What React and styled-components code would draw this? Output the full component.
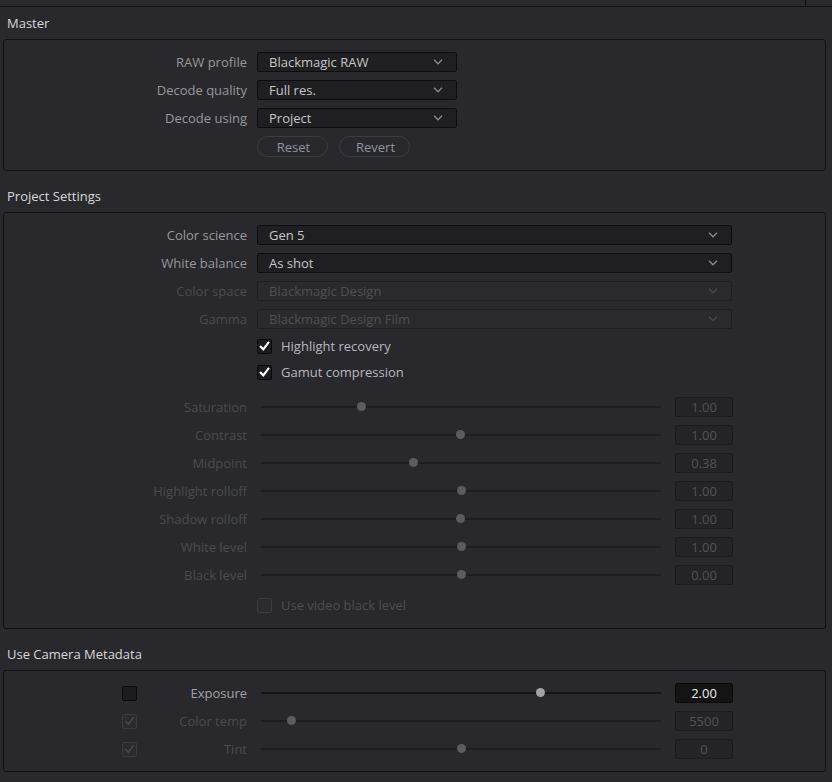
import React from 'react'
import styled, { createGlobalStyle } from 'styled-components'

const GlobalStyle = createGlobalStyle`
  html, body {
    margin: 0;
    padding: 0;
    background: #28282d;
  }
  body {
    font-family: "Open Sans", "Noto Sans", "Liberation Sans", sans-serif;
    font-size: 13px;
    color: #9a9a9e;
  }
`

const Page = styled.div`
  width: 832px;
  height: 782px;
  overflow: hidden;
  background: #28282d;
`
const TabStrip = styled.div`
  height: 6px;
  border-bottom: 1px solid #111113;
  display: flex;
  justify-content: flex-end;
`
const TabEdge = styled.div`
  width: 26px;
  border-left: 1px solid #111113;
`
const Content = styled.div`
  padding: 0 6px 0 3px;
`
const Section = styled.section`
  & + & {
    margin-top: 9px;
  }
`
const SectionTitle = styled.div`
  height: 32px;
  display: flex;
  align-items: center;
  padding-left: 4px;
  color: #d8d8da;
`
const Panel = styled.div`
  border: 1px solid #0f0f11;
  border-radius: 3px;
  padding: 12px 0 ${({ $bottom }) => $bottom || 12}px;
  display: flex;
  flex-direction: column;
  gap: 8px;
`
const Row = styled.div`
  display: grid;
  grid-template-columns: 243px ${({ $control }) => $control || 'auto'};
  column-gap: 10px;
  align-items: center;
  height: ${({ $h }) => $h || 20}px;
  margin-top: ${({ $mt }) => $mt || 0}px;
`
const SliderRowBox = styled.div`
  display: grid;
  grid-template-columns: 243px 400px 58px;
  column-gap: 14px;
  align-items: center;
  height: 20px;
`
const Label = styled.div`
  text-align: right;
  white-space: nowrap;
  color: ${({ $disabled }) => ($disabled ? '#4b4b50' : '#98989c')};
`
const MetaLabel = styled.div`
  display: flex;
  align-items: center;
  justify-content: space-between;
  padding-left: 118px;
  color: ${({ $disabled }) => ($disabled ? '#4b4b50' : '#a2a2a6')};
`
const Select = styled.div`
  height: 20px;
  box-sizing: border-box;
  display: flex;
  align-items: center;
  justify-content: space-between;
  padding: 0 13px 0 11px;
  border-radius: 2px;
  border: 1px solid ${({ $disabled }) => ($disabled ? '#1f1f23' : '#0d0d0f')};
  background: ${({ $disabled }) => ($disabled ? '#29292e' : '#1f1f21')};
  color: ${({ $disabled }) => ($disabled ? '#4f4f55' : '#c6c6c8')};
  svg {
    stroke: ${({ $disabled }) => ($disabled ? '#48484d' : '#8a8a8e')};
  }
`
const Buttons = styled.div`
  display: flex;
  gap: 11px;
`
const PillButton = styled.button`
  width: 71px;
  height: 21px;
  border-radius: 11px;
  border: 1px solid #3c3c43;
  background: transparent;
  color: #8f959e;
  font: inherit;
  padding: 0 0 0 2px;
`
const CheckLine = styled.div`
  display: flex;
  align-items: center;
  gap: 9px;
  color: ${({ $disabled }) => ($disabled ? '#4d4d52' : '#b8b8bc')};
`
const Box = styled.div`
  width: 15px;
  height: 15px;
  box-sizing: border-box;
  border-radius: 2px;
  display: flex;
  align-items: center;
  justify-content: center;
  border: 1px solid ${({ $disabled }) => ($disabled ? '#3a3a3f' : '#0a0a0b')};
  background: ${({ $disabled }) => ($disabled ? '#2a2a2f' : '#1c1c1e')};
  svg {
    stroke: ${({ $disabled }) => ($disabled ? '#4a4a4f' : '#ffffff')};
    stroke-width: ${({ $disabled }) => ($disabled ? 1.4 : 2.2)};
  }
`
const Track = styled.div`
  position: relative;
  height: 2px;
  background: ${({ $disabled }) => ($disabled ? '#1e1e22' : '#151517')};
`
const Thumb = styled.div`
  position: absolute;
  top: -4px;
  width: 9px;
  height: 9px;
  border-radius: 50%;
  background: ${({ $disabled }) => ($disabled ? '#5b5b60' : '#a3a3a6')};
`
const ValueBox = styled.div`
  height: 20px;
  box-sizing: border-box;
  display: flex;
  align-items: center;
  justify-content: center;
  border-radius: 2px;
  border: 1px solid ${({ $disabled }) => ($disabled ? '#1b1b1e' : '#0a0a0b')};
  background: ${({ $disabled }) => ($disabled ? '#242428' : '#141415')};
  color: ${({ $disabled }) => ($disabled ? '#525257' : '#ececee')};
`

const Chevron = () => (
  <svg width="10" height="6" viewBox="0 0 10 6" fill="none" strokeWidth="1.3">
    <polyline points="1,0.8 5,4.8 9,0.8" />
  </svg>
)

const Check = () => (
  <svg width="11" height="11" viewBox="0 0 11 11" fill="none" strokeLinecap="square">
    <polyline points="1.8,5.8 4.3,8.3 9.3,1.8" />
  </svg>
)

const Dropdown = ({ label, value, width, disabled }) => (
  <Row $control={`${width}px`}>
    <Label $disabled={disabled}>{label}</Label>
    <Select $disabled={disabled}>
      <span>{value}</span>
      <Chevron />
    </Select>
  </Row>
)

const CheckRow = ({ label, checked, disabled, mt }) => (
  <Row $h={18} $mt={mt}>
    <div />
    <CheckLine $disabled={disabled}>
      <Box $disabled={disabled}>{checked && <Check />}</Box>
      {label}
    </CheckLine>
  </Row>
)

const Slider = ({ pos, disabled }) => (
  <Track $disabled={disabled}>
    <Thumb $disabled={disabled} style={{ left: `${pos * 400 - 4.5}px` }} />
  </Track>
)

const SliderRow = ({ label, pos, value, disabled = true }) => (
  <SliderRowBox>
    <Label $disabled={disabled}>{label}</Label>
    <Slider pos={pos} disabled={disabled} />
    <ValueBox $disabled={disabled}>{value}</ValueBox>
  </SliderRowBox>
)

const MetaRow = ({ label, pos, value, checked, disabled }) => (
  <SliderRowBox>
    <MetaLabel $disabled={disabled}>
      <Box $disabled={disabled}>{checked && <Check />}</Box>
      <span>{label}</span>
    </MetaLabel>
    <Slider pos={pos} disabled={disabled} />
    <ValueBox $disabled={disabled}>{value}</ValueBox>
  </SliderRowBox>
)

const sliders = [
  { label: 'Saturation', pos: 0.25, value: '1.00' },
  { label: 'Contrast', pos: 0.4975, value: '1.00' },
  { label: 'Midpoint', pos: 0.38, value: '0.38' },
  { label: 'Highlight rolloff', pos: 0.5, value: '1.00' },
  { label: 'Shadow rolloff', pos: 0.4975, value: '1.00' },
  { label: 'White level', pos: 0.5, value: '1.00' },
  { label: 'Black level', pos: 0.5, value: '0.00' },
]

const App = () => (
  <Page>
    <GlobalStyle />
    <TabStrip>
      <TabEdge />
    </TabStrip>
    <Content>
      <Section>
        <SectionTitle>Master</SectionTitle>
        <Panel $bottom={13}>
          <Dropdown label="RAW profile" value="Blackmagic RAW" width={200} />
          <Dropdown label="Decode quality" value="Full res." width={200} />
          <Dropdown label="Decode using" value="Project" width={200} />
          <Row $h={21}>
            <div />
            <Buttons>
              <PillButton>Reset</PillButton>
              <PillButton>Revert</PillButton>
            </Buttons>
          </Row>
        </Panel>
      </Section>

      <Section>
        <SectionTitle>Project Settings</SectionTitle>
        <Panel $bottom={14}>
          <Dropdown label="Color science" value="Gen 5" width={475} />
          <Dropdown label="White balance" value="As shot" width={475} />
          <Dropdown label="Color space" value="Blackmagic Design" width={475} disabled />
          <Dropdown label="Gamma" value="Blackmagic Design Film" width={475} disabled />
          <CheckRow label="Highlight recovery" checked />
          <CheckRow label="Gamut compression" checked />
          <div style={{ height: 0 }} />
          {sliders.map((s) => (
            <SliderRow key={s.label} {...s} />
          ))}
          <CheckRow label="Use video black level" disabled mt={3} />
        </Panel>
      </Section>

      <Section>
        <SectionTitle>Use Camera Metadata</SectionTitle>
        <Panel>
          <MetaRow label="Exposure" pos={0.6975} value="2.00" />
          <MetaRow label="Color temp" pos={0.075} value="5500" checked disabled />
          <MetaRow label="Tint" pos={0.5} value="0" checked disabled />
        </Panel>
      </Section>
    </Content>
  </Page>
)

export default App
